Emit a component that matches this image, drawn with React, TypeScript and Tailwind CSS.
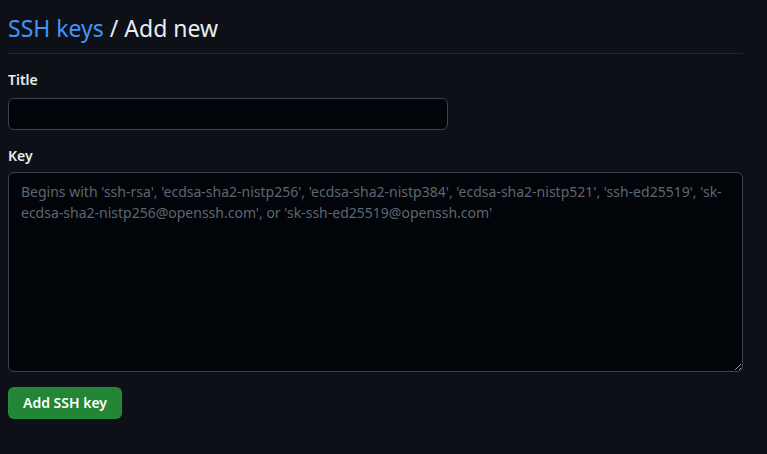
import { useState } from "react"

export default function App() {
  const [title, setTitle] = useState("")
  const [key, setKey] = useState("")

  return (
    <div
      className="min-h-[454px] bg-[#0d1117] text-[#e6edf3] pt-3"
      style={{ fontFamily: '"Noto Sans", "Open Sans", sans-serif' }}
    >
      <div className="w-[735px] ml-2">
        <h2 className="pb-[9px] border-b border-[#21262d] text-[23px] leading-8 font-normal">
          <a href="#" className="text-[#4493f8]">
            SSH keys
          </a>{" "}
          / Add new
        </h2>

        <form className="mt-4" onSubmit={(e) => e.preventDefault()}>
          <label className="block text-sm font-semibold leading-5 mb-2">Title</label>
          <input
            value={title}
            onChange={(e) => setTitle(e.target.value)}
            className="block w-[440px] h-8 px-3 rounded-md border border-[#3d444d] bg-[#010409] text-sm outline-none"
          />

          <label className="block mt-4 mb-1.5 text-sm font-semibold leading-5">Key</label>
          <textarea
            value={key}
            onChange={(e) => setKey(e.target.value)}
            placeholder="Begins with 'ssh-rsa', 'ecdsa-sha2-nistp256', 'ecdsa-sha2-nistp384', 'ecdsa-sha2-nistp521', 'ssh-ed25519', 'sk-ecdsa-sha2-nistp256@openssh.com', or 'sk-ssh-ed25519@openssh.com'"
            className="block w-full h-[200px] px-3 py-2 rounded-md border border-[#3d444d] bg-[#010409] text-sm leading-[21px] placeholder:text-[#5f6670] outline-none"
          />

          <button
            type="submit"
            className="mt-[15px] h-8 w-[114px] rounded-md bg-[#238636] border border-[#2d9540]/40 text-sm font-semibold text-white"
          >
            Add SSH key
          </button>
        </form>
      </div>
    </div>
  )
}
